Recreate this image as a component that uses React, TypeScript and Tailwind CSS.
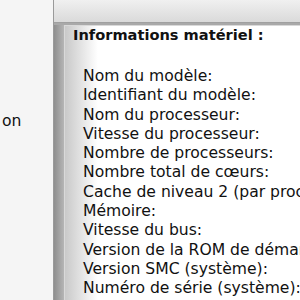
const rows = [
  'Nom du modèle:',
  'Identifiant du modèle:',
  'Nom du processeur:',
  'Vitesse du processeur:',
  'Nombre de processeurs:',
  'Nombre total de cœurs:',
  'Cache de niveau 2 (par processeur):',
  'Mémoire:',
  'Vitesse du bus:',
  'Version de la ROM de démarrage:',
  'Version SMC (système):',
  'Numéro de série (système):',
]

export default function App() {
  return (
    <div className="flex w-[300px] h-[300px] overflow-hidden font-['DejaVu_Sans',sans-serif] text-[15.6px] text-[#111]">
      <aside className="w-[54px] shrink-0 bg-[#f5f5f5] border-r border-[#9a9a9a] pt-[111px]">
        <p className="pl-[2px] whitespace-nowrap leading-[20px]">on</p>
      </aside>
      <main className="flex-1 flex flex-col min-w-0">
        <div className="h-[23px] shrink-0 bg-gradient-to-b from-[#f0f0f0] to-[#dadada] border-b border-[#a0a0a0]" />
        <div className="flex-1 flex min-h-0 pt-[2px] bg-[#a9a9a9]">
          <div className="w-[10px] shrink-0 bg-gradient-to-r from-[#8f8f8f] to-[#b5b5b5]" />
          <div className="flex-1 min-w-0 border-l border-t border-[#d9d9d9] bg-gradient-to-r from-[#c9c9c9] via-white via-[14%] to-white pl-[8px] overflow-hidden">
            <h2 className="font-bold text-[14.6px] leading-[18px] whitespace-nowrap">Informations matériel :</h2>
            <ul className="pl-[10px] pt-[23px]">
              {rows.map((r) => (
                <li key={r} className="whitespace-nowrap leading-[19.3px]">
                  {r}
                </li>
              ))}
            </ul>
          </div>
        </div>
      </main>
    </div>
  )
}
